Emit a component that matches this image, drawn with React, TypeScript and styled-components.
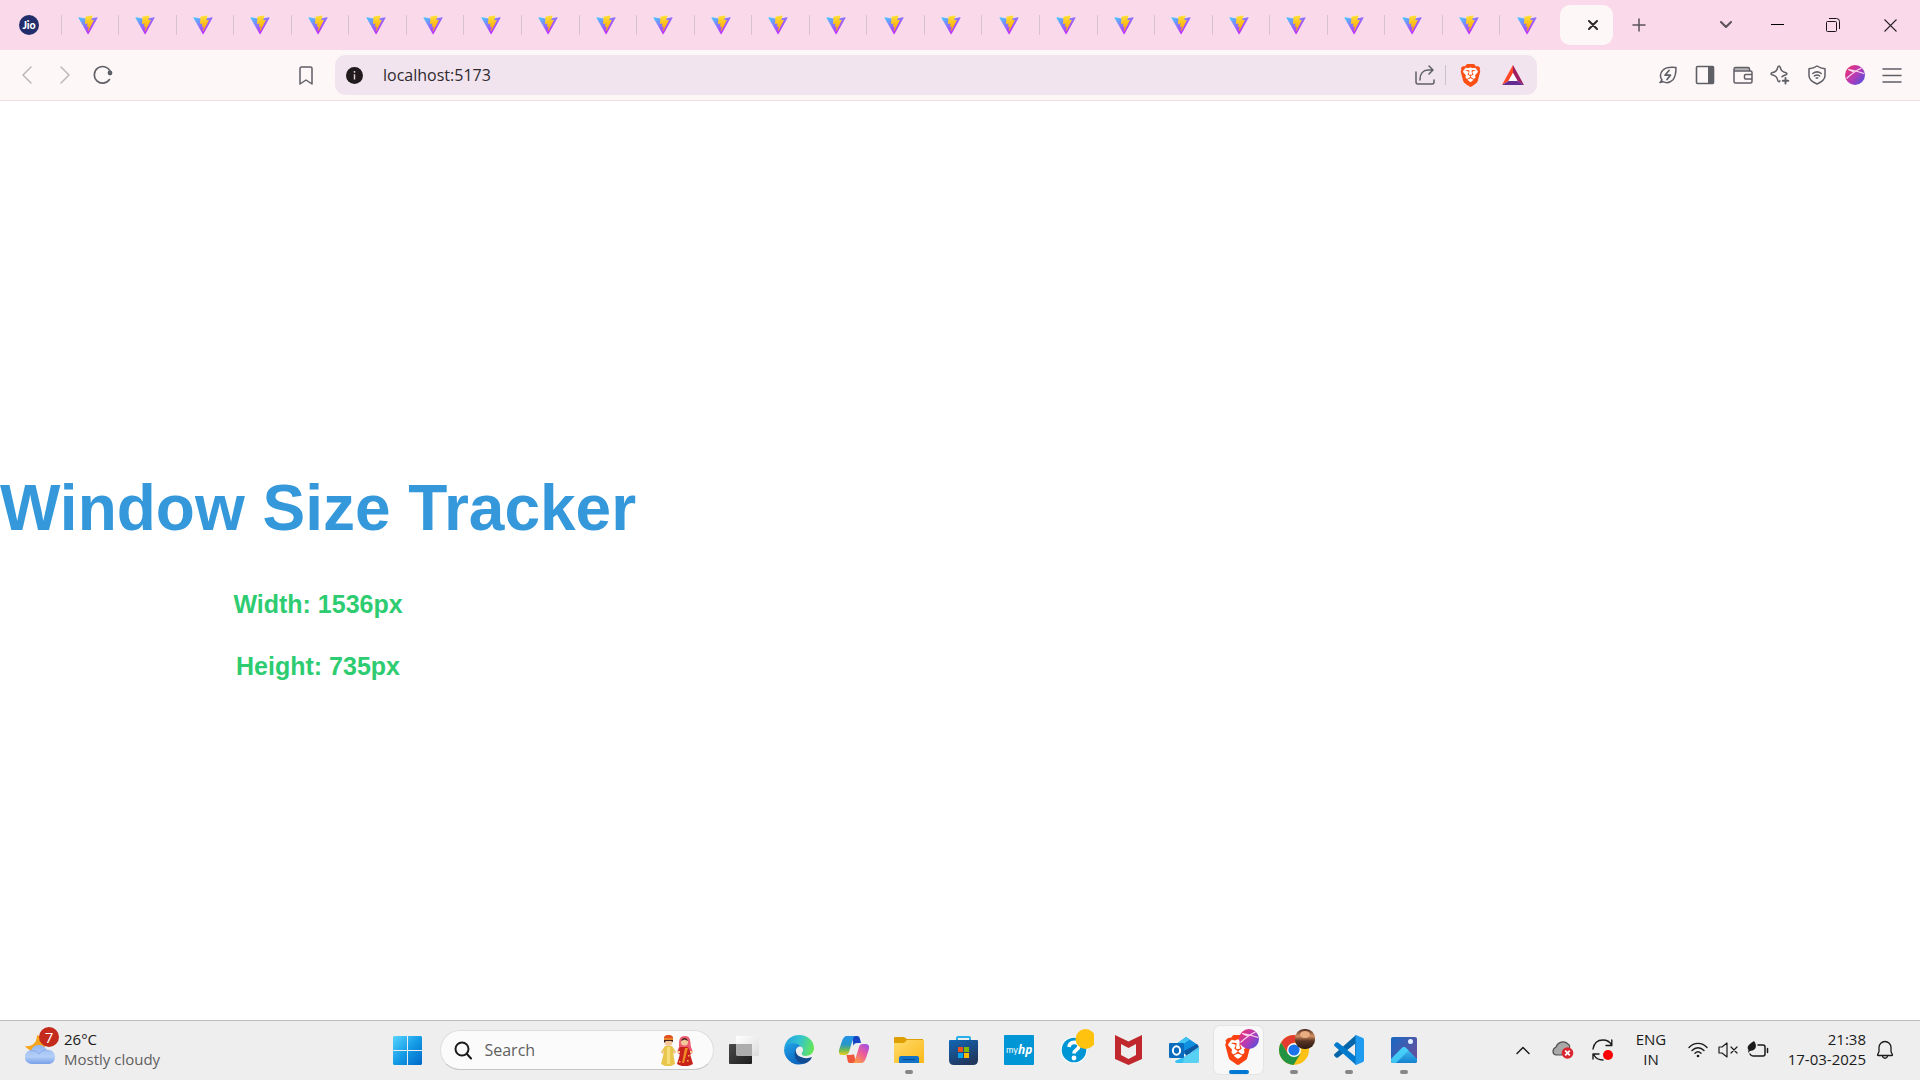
import React, { useEffect, useState } from "react";
import styled, { createGlobalStyle } from "styled-components";
import { SiBrave } from "react-icons/si";

const uiFont = '"Open Sans", "Noto Sans", sans-serif';

const GlobalStyle = createGlobalStyle`
  * { box-sizing: border-box; }
  body { margin: 0; background: #fff; font-family: ${uiFont}; }
  button { border: 0; padding: 0; background: none; font: inherit; color: inherit; cursor: pointer; }
  svg { display: block; flex: none; }
`;

const Screen = styled.div`
  display: flex;
  flex-direction: column;
  min-height: 100vh;
`;

/* ---------- tab strip ---------- */

const TabStrip = styled.header`
  display: flex;
  align-items: center;
  height: 50px;
  padding-left: 4px;
  background: #fad9ea;
  color: #5b5358;
`;

const TabList = styled.nav`
  display: grid;
  grid-auto-flow: column;
  grid-auto-columns: minmax(0, 1fr);
  flex: 1;
  min-width: 0;
`;

const Tab = styled.button`
  display: flex;
  align-items: center;
  justify-content: center;
  height: 20px;
  padding-right: 4px;
  border-right: 1px solid #d9c2cf;
  &:first-child { padding-right: 6px; }
  &:last-child { border-color: transparent; }
`;

const ActiveTab = styled.div`
  display: flex;
  align-items: center;
  justify-content: flex-end;
  width: 53px;
  height: 40px;
  padding-right: 10px;
  margin-left: 2px;
  border-radius: 10px;
  background: #fef7f8;
  color: #2d282b;
`;

const IconButton = styled.button<{ $w: number; $h?: number }>`
  display: flex;
  align-items: center;
  justify-content: center;
  width: ${(p) => p.$w}px;
  height: ${(p) => p.$h ?? 40}px;
`;

const NewTab = styled(IconButton)`
  margin: 0 43px 0 5px;
`;

/* ---------- toolbar ---------- */

const Toolbar = styled.div`
  display: flex;
  align-items: center;
  height: 51px;
  background: #fef7f8;
  border-bottom: 1px solid #f1dde4;
  color: #5f5f66;
`;

const Navigation = styled.div`
  display: flex;
  width: 335px;
  padding: 0 10px 0 8px;
`;

const BookmarkButton = styled(IconButton)`
  margin-left: auto;
`;

const AddressBar = styled.label`
  display: flex;
  align-items: center;
  flex: 1;
  min-width: 0;
  height: 40px;
  padding: 0 4px 0 11px;
  border-radius: 10px;
  background: #f1e4ee;
`;

const AddressInput = styled.input`
  flex: 1;
  min-width: 0;
  margin-left: 20px;
  padding: 0;
  border: 0;
  outline: 0;
  background: none;
  color: #2f292e;
  font: 16px/24px ${uiFont};
`;

const Divider = styled.span`
  width: 1px;
  height: 20px;
  margin-right: 1px;
  background: #cbc3cc;
`;

const Tools = styled.div`
  display: grid;
  grid-template-columns: repeat(7, 1fr);
  justify-items: center;
  width: 262px;
  margin: 0 9px 0 112px;
`;

/* ---------- page ---------- */

const Page = styled.main`
  display: flex;
  align-items: center;
  flex: 1;
  padding-top: 18px;
  font-family: "Liberation Sans", Arial, sans-serif;
  font-weight: 700;
  text-align: center;
`;

const Title = styled.h1`
  margin: 43px 0 42px;
  color: #3498db;
  font-size: 64px;
  line-height: 70px;
`;

const Measure = styled.p`
  margin: 0 0 24px;
  color: #2ecc71;
  font-size: 25px;
  line-height: 38px;
`;

/* ---------- taskbar ---------- */

const Taskbar = styled.footer`
  display: grid;
  grid-template-columns: minmax(0, 380fr) auto minmax(0, 488fr);
  align-items: center;
  height: 60px;
  padding-bottom: 1px;
  border-top: 1px solid #bcbcbc;
  background: #eeeeee;
  color: #1b1b1b;
`;

const Weather = styled.button`
  display: flex;
  align-items: center;
  gap: 9px;
  justify-self: start;
  margin-left: 25px;
  text-align: left;
`;

const WeatherIcon = styled.span`
  position: relative;
`;

const Badge = styled.span`
  position: absolute;
  top: -8px;
  right: -4px;
  width: 20px;
  height: 20px;
  border-radius: 50%;
  background: #c42b1c;
  color: #fff;
  font-size: 15px;
  line-height: 20px;
  text-align: center;
`;

const Lines = styled.span<{ $align?: string }>`
  display: flex;
  flex-direction: column;
  align-items: ${(p) => p.$align ?? "flex-start"};
  padding-bottom: 2px;
  font-size: 15px;
  line-height: 20px;
`;

const Muted = styled.span`
  color: #5f5f5f;
`;

const Apps = styled.div`
  display: flex;
  align-items: center;
`;

const SearchBox = styled.label`
  display: flex;
  align-items: center;
  width: 274px;
  height: 40px;
  margin: 0 2px 0 5px;
  padding: 0 20px 0 13px;
  border: 1px solid #dedede;
  border-bottom-color: #c6c6c6;
  border-radius: 20px;
  background: #fbfbfb;
`;

const SearchInput = styled.input`
  flex: 1;
  min-width: 0;
  margin-left: 12px;
  padding: 0;
  border: 0;
  outline: 0;
  background: none;
  color: #1b1b1b;
  font: 16px/24px ${uiFont};
  &::placeholder { color: #5f5f5f; opacity: 1; }
`;

const AppSlot = styled.button<{ $state?: "idle" | "running" | "active" }>`
  position: relative;
  display: flex;
  align-items: center;
  justify-content: center;
  width: 49px;
  height: 48px;
  margin: 0 3px;
  border-radius: 6px;
  background: ${(p) => (p.$state === "active" ? "#f8f8f8" : "transparent")};
  box-shadow: ${(p) => (p.$state === "active" ? "0 0 0 1px #e4e4e4" : "none")};
  &::after {
    content: "";
    position: absolute;
    bottom: 0;
    width: ${(p) => (p.$state === "active" ? 20 : 8)}px;
    height: 4px;
    border-radius: 2px;
    background: ${(p) =>
      p.$state === "active" ? "#0078d4" : p.$state === "running" ? "#868686" : "transparent"};
  }
`;

const Tray = styled.div`
  display: flex;
  align-items: center;
  justify-content: flex-end;
  padding-right: 16px;
`;

const Language = styled.button`
  width: 56px;
  margin-right: 4px;
`;

const QuickSettings = styled.button`
  display: grid;
  grid-template-columns: repeat(3, 30px);
  align-items: center;
  justify-items: center;
  height: 40px;
`;

const Clock = styled.button`
  width: 93px;
`;

/* ---------- drawings ---------- */

const line = {
  fill: "none",
  stroke: "currentColor",
  strokeLinecap: "round",
  strokeLinejoin: "round",
} as const;

const SharedPaints = () => (
  <defs>
    <linearGradient id="viteBody" gradientUnits="userSpaceOnUse" x1="6" y1="33" x2="235" y2="344">
      <stop stopColor="#41D1FF" />
      <stop offset="1" stopColor="#BD34FE" />
    </linearGradient>
    <linearGradient id="viteBolt" gradientUnits="userSpaceOnUse" x1="194.6" y1="8.8" x2="236" y2="293">
      <stop stopColor="#FFEA83" />
      <stop offset="0.083" stopColor="#FFDD35" />
      <stop offset="1" stopColor="#FFA800" />
    </linearGradient>
  </defs>
);

const ViteLogo = () => (
  <svg width="20" height="20" viewBox="0 0 410 404">
    <SharedPaints />
    <path fill="url(#viteBody)" d="M399.641 59.5246L215.643 388.545C211.844 395.338 202.084 395.378 198.228 388.618L10.5817 59.5563C6.38087 52.1896 12.6802 43.2665 21.0281 44.7586L205.223 77.6824C206.398 77.8924 207.601 77.8904 208.776 77.6763L389.119 44.8058C397.439 43.2894 403.768 52.1434 399.641 59.5246Z" />
    <path fill="url(#viteBolt)" d="M292.965 1.5744L156.801 28.2552C154.563 28.6937 152.906 30.5903 152.771 32.8664L144.395 174.33C144.198 177.662 147.258 180.248 150.51 179.498L188.42 170.749C191.967 169.931 195.172 173.055 194.443 176.622L183.18 231.775C182.422 235.487 185.907 238.661 189.532 237.56L212.947 230.446C216.577 229.344 220.065 232.527 219.297 236.242L201.398 322.875C200.278 328.294 207.486 331.249 210.492 326.603L212.5 323.5L323.454 102.072C325.312 98.3645 322.108 94.137 318.036 94.9228L279.014 102.454C275.347 103.161 272.227 99.746 273.262 96.1583L298.731 7.86689C299.767 4.27314 296.636 0.855181 292.965 1.5744Z" />
  </svg>
);

const JioLogo = () => (
  <svg width="20" height="20" viewBox="0 0 20 20">
    <circle cx="10" cy="10" r="10" fill="#222d6b" />
    <text x="10" y="13.5" fill="#fff" fontFamily="Lato, sans-serif" fontSize="10.5" fontWeight="900" textAnchor="middle">Jio</text>
  </svg>
);

const BraveLogo = ({ size }: { size: number }) => (
  <svg width={size} height={size} viewBox="0 0 24 24">
    <ellipse cx="12" cy="12" rx="7.5" ry="9" fill="#fff" />
    <SiBrave size={24} color="#fb4f14" />
  </svg>
);

const BatLogo = () => (
  <svg width="22" height="20" viewBox="0 0 22 20">
    <path fill="#ff4724" d="M11 0 0 20l6.500-4L11 8z" />
    <path fill="#9e1f63" d="M11 0l11 20-6.500-4L11 8z" />
    <path fill="#662d91" d="M0 20h22l-6.500-4h-9z" />
    <path fill="#fff" d="M11 8l4.500 8h-9z" />
  </svg>
);

const ShareIcon = () => (
  <svg width="20" height="20" viewBox="0 0 20 20" {...line} strokeWidth="1.5">
    <path d="M1 7v10a2 2 0 0 0 2 2h14a2 2 0 0 0 2-2v-2M5 15v-1c0-5 3-9 8-9h5M14 1l4 4-4 4" />
  </svg>
);

const InfoIcon = () => (
  <svg width="17" height="17" viewBox="0 0 17 17">
    <circle cx="8.500" cy="8.500" r="8.500" fill="#201a1c" />
    <path d="M8.500 4v1.700M8.500 7.200V12.500" stroke="#d8ccd5" strokeWidth="1.500" />
  </svg>
);

const LeafIcon = () => (
  <svg width="18" height="18" viewBox="0 0 18 18" {...line} strokeWidth="1.500">
    <path d="M17 1.500c-5-.500-10-.500-13 2.500-3 3-3 7-1 10l-2 2.500 3-.800c3 1.500 7 1 10-2 2.500-3 3-7 3-12.200z" />
    <path d="M10 4.500 6 9.200h5.500L8 13.500" strokeWidth="1.700" />
  </svg>
);

const SidebarIcon = () => (
  <svg width="20" height="20" viewBox="0 0 20 20">
    <rect x="1.500" y="1.500" width="17" height="17" rx="1" {...line} strokeWidth="1.600" />
    <path fill="currentColor" d="M13 1.500h6v17h-6z" />
  </svg>
);

const WalletIcon = () => (
  <svg width="20" height="18" viewBox="0 0 20 18" {...line} strokeWidth="1.500">
    <path d="M16.500 5V3a1.500 1.500 0 0 0-1.500-1.500H2.500A1.500 1.500 0 0 0 1 3v12.500A1.500 1.500 0 0 0 2.500 17h15a1.500 1.500 0 0 0 1.500-1.500v-9A1.500 1.500 0 0 0 17.500 5H1M19 8.500h-6.500a1 1 0 0 0-1 1V12a1 1 0 0 0 1 1H19" />
    <path d="M1.500 2h15v2.500h-15z" fill="currentColor" fillOpacity=".45" stroke="none" />
  </svg>
);

const SparkleIcon = () => (
  <svg width="20" height="20" viewBox="0 0 20 20" {...line} strokeWidth="1.500">
    <path d="M9 1c.600 0 .900.400 1.100 1 1 3.700 1.800 4.600 5.900 5.800 1.200.400 1.200 1.600 0 2-2 .600-3.200 1-4 2M9 1c-.600 0-.900.400-1.100 1-1 3.700-1.900 4.600-6 5.800-1.200.400-1.200 1.600 0 2C6 11 6.900 12 7.900 15.700c.400 1.200 1.600 1.200 2 .200" />
    <path d="M15.500 13v5.500M12.800 15.700h5.500" strokeWidth="1.900" />
  </svg>
);

const ShieldIcon = () => (
  <svg width="18" height="20" viewBox="0 0 18 20" {...line} strokeWidth="1.500">
    <path d="M9 1c2.500 1.800 5 2.500 8 2.700v6.800c0 4-4 6.800-8 8.500-4-1.700-8-4.500-8-8.500V3.700C4 3.500 6.500 2.800 9 1z" />
    <path d="M4.800 8.500c2.600-2 5.800-2 8.400 0M6.300 11c1.700-1.300 3.700-1.300 5.400 0M8.200 13h1.600" />
  </svg>
);

const ProfileOrb = ({ size }: { size: number }) => (
  <svg width={size} height={size} viewBox="0 0 20 20">
    <defs>
      <linearGradient id="orb" x1="0" y1="0.100" x2="1" y2="0.900">
        <stop stopColor="#f0306a" />
        <stop offset=".5" stopColor="#b83bb4" />
        <stop offset="1" stopColor="#4c50e0" />
      </linearGradient>
    </defs>
    <circle cx="10" cy="10" r="10" fill="url(#orb)" />
    <path d="M3 4.500c5 .500 10 2 16 4M1.500 13.500C7 8.500 11 5.500 16.500 3M4 5l5 2" fill="none" stroke="#fbdcf0" strokeWidth="1.100" />
  </svg>
);

const MenuIcon = () => (
  <svg width="20" height="18" viewBox="0 0 20 18" {...line} strokeWidth="1.500">
    <path d="M1 3h18M1 9.500h18M1 16h18" />
  </svg>
);

const Stroke = ({ d, w, h, weight = 1.5 }: { d: string; w: number; h: number; weight?: number }) => (
  <svg width={w} height={h} viewBox={`0 0 ${w} ${h}`} {...line} strokeWidth={weight}>
    <path d={d} />
  </svg>
);

const ReloadIcon = () => (
  <svg width="20" height="20" viewBox="0 0 20 20">
    <path {...line} strokeWidth="1.600" d="M16.500 14.500A8.300 8.300 0 1 1 17 6" />
    <circle cx="17" cy="8" r="2.400" fill="currentColor" />
  </svg>
);

const CloudMoon = () => (
  <svg width="30" height="30" viewBox="0 0 30 30">
    <defs>
      <linearGradient id="cloud" x1="0" y1="0" x2="0" y2="1">
        <stop stopColor="#94b6f1" />
        <stop offset=".6" stopColor="#b4cff8" />
        <stop offset="1" stopColor="#789fe8" />
      </linearGradient>
    </defs>
    <path fill="#f6a41c" d="M12 0c7 2 10 8 7 14l-8 2C6 16 2 14 0 11c7 1 12-3 12-11z" />
    <path fill="url(#cloud)" d="M7 29a7 7 0 0 1-.500-14C7.500 11.500 10.500 10 14 10c4 0 6.500 2 7.500 5 5-1 8.500 3 8.500 7 0 4.500-3 7-7 7z" />
    <path fill="none" stroke="#86a9e9" d="M5 16c4-1 7 0 9 3M14 19c2-3 4-4 8-4" />
  </svg>
);

const WindowsLogo = () => (
  <svg width="29" height="29" viewBox="0 0 29 29">
    <defs>
      <linearGradient id="win" x1="0" y1="0" x2="29" y2="29" gradientUnits="userSpaceOnUse">
        <stop stopColor="#58d5ff" />
        <stop offset=".5" stopColor="#149be6" />
        <stop offset="1" stopColor="#0067c8" />
      </linearGradient>
    </defs>
    <path fill="url(#win)" d="M1 0h13v14H0V1zM15 0h13l1 1v13H15zM0 15h14v14H1l-1-1zM15 15h14v13l-1 1H15z" />
  </svg>
);

const WeddingPair = () => (
  <svg width="32" height="31" viewBox="0 0 32 31">
    <path fill="#e8c64c" d="M4 11h7l4 6-2 2-1-2 2 12-4 2H4l-4-2 3-12-1 2-2-2z" />
    <path fill="#f6dd79" d="M6 12h3v17H6z" />
    <circle cx="7.500" cy="7" r="4" fill="#f4c79a" />
    <path fill="#42201b" d="M3 4h9v3l-2-1H5L3 8z" />
    <path fill="#e2511e" d="M3 2c2-3 7-3 9 0v3H3z" />
    <path fill="#e8b93a" d="M3 3.500h9v1H3z" />
    <path fill="#ec5d72" d="M18 12c0-7 0-11 6-11s5 5 6 11l2 5-3 3H19l-3-3z" />
    <circle cx="23.500" cy="7" r="3.600" fill="#f4c79a" />
    <path fill="#4a211c" d="M20 6c1-4 6-4 7 0l-3.500-1.500z" />
    <path fill="#c9211c" d="M19 12h8l3 6-1 1 3 10c-5 3-11 3-16 0l3-10-2-2z" />
    <path fill="#f08a23" d="M24 13h3l-4 15h-2z" />
    <path fill="#f3bd43" d="M18 26h1.500v1.500H18zM26 25h1.500v1.500H26zM27 20h1.500v1.500H27z" />
    <path fill="#f4c79a" d="M0 16h3v2H0zM12 16h3v2h-3zM16 16h3v2h-3zM29 16h3v2h-3z" />
  </svg>
);

const TaskView = () => (
  <svg width="30" height="28" viewBox="0 0 30 28">
    <defs>
      <linearGradient id="tvDark" x1="0" y1="0" x2="1" y2="1"><stop stopColor="#4a4a4a" /><stop offset="1" stopColor="#1e1e1e" /></linearGradient>
      <linearGradient id="tvLight" x1="0" y1="0" x2="1" y2="1"><stop stopColor="#fff" /><stop offset="1" stopColor="#dcdcdc" /></linearGradient>
    </defs>
    <rect x="7" width="23" height="20" rx="1" fill="url(#tvLight)" />
    <rect y="8" width="23" height="20" rx="1" fill="url(#tvDark)" />
    <path d="M7 8h16v12H8l-1-1z" fill="#adadad" />
  </svg>
);

const EdgeLogo = () => (
  <svg width="30" height="30" viewBox="0 0 30 30">
    <defs>
      <linearGradient id="edgeTop" x1="0" y1=".3" x2="1" y2=".5"><stop stopColor="#1f9fe0" /><stop offset=".5" stopColor="#34c4cf" /><stop offset="1" stopColor="#66e656" /></linearGradient>
      <linearGradient id="edgeLeft" x1="0" y1="0" x2=".6" y2="1"><stop stopColor="#22a4e8" /><stop offset="1" stopColor="#0a62bd" /></linearGradient>
    </defs>
    <path fill="url(#edgeTop)" d="M0 14C1 5.500 7 0 15 0c9 0 15 6 15 13 0 5-4 8-8.500 8-3 0-4.500-1-4-2.500 2-3 1-7-4-8.500C8 8 2 10 0 14z" />
    <path fill="url(#edgeLeft)" d="M0 15c1-5 6-7.500 11-6.500 4 .800 7 3 7.500 6.500-3-3-7-.500-7 4 0 6 5 9 11 8.500A15 15 0 0 1 0 15z" />
    <path fill="#124c92" d="M12 14c-4 7 1 15 9 14.500 3-.800 6-3.500 7-6.500-7 3-15 0-16-8z" />
    <path fill="#eee" d="M12 17c-.800-3 1.500-5.500 4-5.500 2 0 3 1.500 3 3.500 0 1.800-2.500 3.500-1 5 2 1.800 6 1.500 9 .500-6 3.500-14 2-15-3.500z" />
  </svg>
);

const CopilotLogo = () => (
  <svg width="30" height="28" viewBox="0 0 30 28">
    <defs>
      <linearGradient id="coA" x1="0" y1="0" x2="0" y2="1"><stop stopColor="#2394ec" /><stop offset=".45" stopColor="#2797c8" /><stop offset=".75" stopColor="#74b94e" /><stop offset="1" stopColor="#edcd24" /></linearGradient>
      <linearGradient id="coB" x1="1" y1="0" x2=".3" y2="1"><stop stopColor="#9a4ef0" /><stop offset=".5" stopColor="#ea5b9c" /><stop offset="1" stopColor="#ff9a4b" /></linearGradient>
    </defs>
    <path fill="#1544c5" d="M13 0h5c2 0 2.500 1 3 3l1 4h-4c-2 0-3 1-3.500 3z" />
    <path fill="#ef573d" d="M17 27h-6c-2 0-2-1-2.500-3L7.500 19H11c2 0 3-1 3.500-3z" />
    <path fill="url(#coA)" d="M8 0h9c-2 0-2.500 1-3 3l-4 13c-.600 2-1.500 3-4 3H3c-2.500 0-3.500-2-3-5L3 5c1-3 2.500-5 5-5z" />
    <path fill="url(#coB)" d="M22 27h-9c2 0 2.500-1 3-3l4-13c.600-2 1.500-3 4-3h3c2.500 0 3.500 2 3 5l-3 9c-1 3-2.500 5-5 5z" />
    <path fill="#eee" d="M15.500 8.500h3.500L15.500 18.500H12z" />
  </svg>
);

const FolderLogo = () => (
  <svg width="30" height="28" viewBox="0 0 30 28">
    <defs><linearGradient id="fold" x1="0" y1="0" x2="1" y2="1"><stop stopColor="#ffdc6b" /><stop offset="1" stopColor="#fbb819" /></linearGradient></defs>
    <path fill="#dfa006" d="M0 2q0-1 1-1h9l3 2h16v4H0z" />
    <path fill="url(#fold)" d="M0 7h10l3-3h17v23H0z" />
    <path fill="#1173c7" d="M5 27v-5q0-2 2-2h16q2 0 2 2v5z" />
    <path stroke="#0a4a8c" d="M9 23.500h12" />
  </svg>
);

const StoreLogo = () => (
  <svg width="29" height="30" viewBox="0 0 29 30">
    <defs><linearGradient id="store" x1="0" y1="0" x2=".5" y2="1"><stop stopColor="#1267b5" /><stop offset="1" stopColor="#21375f" /></linearGradient></defs>
    <path fill="none" stroke="#28afea" strokeWidth="2" d="M8 7V3q0-1 1-1h11q1 0 1 1v4" />
    <path fill="url(#store)" d="M0 6q0-1 1-1h27q1 0 1 1v19q0 5-5 5H5q-5 0-5-5z" />
    <path fill="#f1511b" d="M9 12h5v5H9z" /><path fill="#80b900" d="M15 12h5v5h-5z" />
    <path fill="#00a4ef" d="M9 18h5v5H9z" /><path fill="#ffb901" d="M15 18h5v5h-5z" />
  </svg>
);

const MyHpLogo = () => (
  <svg width="30" height="30" viewBox="0 0 30 30">
    <rect width="30" height="30" rx="1" fill="#0096d6" />
    <text x="2" y="18" fill="#fff" fontFamily="Lato, sans-serif" fontSize="9">my</text>
    <text x="14" y="19" fill="#fff" fontFamily='"Open Sans", sans-serif' fontSize="12" fontWeight="700" fontStyle="italic">hp</text>
  </svg>
);

const HelpLogo = () => (
  <svg width="40" height="42" viewBox="-7 -1 40 42">
    <circle cx="13" cy="20" r="13.300" fill="#fff" />
    <circle cx="13" cy="20" r="12.300" fill="#0096d6" />
    <path fill="none" stroke="#fff" strokeWidth="3.600" d="M8 17c.500-6 10-6 10-1 0 4-5 3.500-5 7.500" />
    <circle cx="13" cy="28" r="2.400" fill="#fff" />
    <circle cx="24.500" cy="9" r="10" fill="#ffc20e" />
  </svg>
);

const McAfeeLogo = () => (
  <svg width="27" height="30" viewBox="0 0 27 30">
    <path fill="#c1282d" d="M0 0l13.500 6.500L27 0v24l-13.500 6L0 24zM6 9v11l7.500 4 7.500-4V9l-7.500 4z" fillRule="evenodd" />
  </svg>
);

const OutlookLogo = () => (
  <svg width="30" height="27" viewBox="0 0 30 27">
    <path fill="#0f8fe0" d="M6 8L17 0l12 8-9 9H6z" />
    <path fill="#41c3f2" d="M7 7L17 0l4 2.500L10 10z" />
    <path fill="#0c59a4" d="M15 14L28 7l2 3-13 9z" />
    <path fill="#35c1f1" d="M30 10v14q0 2-2 2H8q-2 0-2-2l13-6z" />
    <path fill="#7de2f6" d="M15 20l15-8v14H14z" opacity=".5" />
    <rect y="6" width="15" height="15" rx="1" fill="#0a6cbd" />
    <ellipse cx="7.500" cy="13.500" rx="3.600" ry="4.200" fill="none" stroke="#fff" strokeWidth="2" />
  </svg>
);

const BraveApp = () => (
  <svg width="44" height="42" viewBox="0 0 44 42">
    <svg x="6" y="6" width="30" height="30" viewBox="0 0 24 24">
      <ellipse cx="12" cy="12" rx="7.500" ry="9" fill="#fff" />
      <SiBrave size={24} color="#fb4312" />
    </svg>
    <svg x="22" y="0" width="20" height="20"><ProfileOrb size={20} /></svg>
  </svg>
);

const ChromeApp = () => (
  <svg width="42" height="42" viewBox="-6 0 42 42">
    <defs><linearGradient id="portrait" x1="0" y1="0" x2="0" y2="1"><stop stopColor="#4b2a1e" /><stop offset=".35" stopColor="#d38f63" /><stop offset=".6" stopColor="#5a3424" /><stop offset="1" stopColor="#2c1a15" /></linearGradient></defs>
    <circle cx="15" cy="21" r="15" fill="#fbc116" />
    <path fill="#e33b2e" d="M2 13.500A15 15 0 0 1 28 13.500H15L9 24.500z" />
    <path fill="#229342" d="M2 13.500A15 15 0 0 0 14.500 36L21.500 24.700 9 24.800z" />
    <circle cx="15" cy="21" r="7" fill="#fff" />
    <circle cx="15" cy="21" r="5.600" fill="#1a73e8" />
    <rect x="16" y="0" width="20" height="20" rx="9" fill="url(#portrait)" />
    <ellipse cx="26" cy="5.500" rx="5" ry="3.500" fill="#e8ad80" />
  </svg>
);

const CodeLogo = () => (
  <svg width="30" height="30" viewBox="0 0 30 30">
    <path fill="#0065a9" d="M22 0v8L4 22.500q-1 .700-2 0L.500 21q-1-1 0-2z" />
    <path fill="#007acc" d="M22 30v-8L4 7.500q-1-.700-2 0L.500 9q-1 1 0 2z" />
    <path fill="#1f9cf0" d="M22 0l7 3q1 .500 1 2v20q0 1.500-1 2l-7 3q-1 0-1-1V1z" />
    <path fill="#1481ca" d="M21 1h1v28h-1z" />
  </svg>
);

const PhotosLogo = () => (
  <svg width="26" height="26" viewBox="0 0 26 26">
    <defs>
      <linearGradient id="phBg" x1="0" y1="0" x2="1" y2=".7"><stop stopColor="#1769c4" /><stop offset="1" stopColor="#65509f" /></linearGradient>
      <linearGradient id="phHill" x1="0" y1="0" x2="0" y2="1"><stop stopColor="#46c8f4" /><stop offset="1" stopColor="#1580d0" /></linearGradient>
    </defs>
    <rect width="26" height="26" rx="2" fill="url(#phBg)" />
    <path fill="url(#phHill)" d="M0 22L11 11q2-2 4 0l11 11v2q0 2-2 2H2q-2 0-2-2z" />
    <path fill="#48d4fa" d="M0 22L11 11q2-2 4 0l2.500 2.500L5 26H2q-2 0-2-2z" opacity=".8" />
    <circle cx="19.500" cy="4.500" r="2.500" fill="#e6efff" />
  </svg>
);

const CloudError = () => (
  <svg width="22" height="20" viewBox="0 0 22 20">
    <path fill="#a9a9a9" stroke="#4f4f4f" strokeWidth="1.200" d="M4 15c-4-1-4-6 0-8C6 2 12 0 16 4c2 1 2 3 1 5l-7 6z" />
    <circle cx="15.500" cy="13" r="5.800" fill="#d9262f" />
    <path stroke="#fff" strokeWidth="1.700" d="M13.200 10.700l4.600 4.600m0-4.600l-4.600 4.600" />
  </svg>
);

const SyncIcon = () => (
  <svg width="22" height="22" viewBox="0 0 22 22">
    <path {...line} strokeWidth="1.400" d="M1 10C2 4 6 1 11 1c4 0 7 2 8.500 5M19.800 1v5.500H14M1 20v-5h6M2 16c1.500 3 5 5 9 5" />
    <circle cx="16" cy="16" r="5" fill="#f00" />
  </svg>
);

const WifiIcon = () => (
  <svg width="20" height="16" viewBox="0 0 20 16" {...line} strokeWidth="1.400">
    <path d="M1 5.500c5-5.500 13-5.500 18 0M4 8.500c3.500-3.700 8.500-3.700 12 0M7 11.300c2-2 4-2 6 0" />
    <circle cx="10" cy="14" r="1.300" fill="currentColor" stroke="none" />
  </svg>
);

const MutedIcon = () => (
  <svg width="20" height="16" viewBox="0 0 20 16" {...line} strokeWidth="1.200">
    <path d="M1 5h3l5-4v14l-5-4H1zM13 5l6 6M19 5l-6 6" />
  </svg>
);

const BatteryIcon = () => (
  <svg width="22" height="18" viewBox="0 0 22 18">
    <path {...line} strokeWidth="1.500" d="M11 4h5q2 0 2 2v7q0 2-2 2H6q-2 0-3-2M20.500 7.500v4" />
    <path fill="currentColor" d="M7 0c3 4 2.500 8-1.500 9.500L3 10l-2 2 .500-3C-1 6 2 3 7 0z" />
  </svg>
);

const BellIcon = () => (
  <svg width="18" height="20" viewBox="0 0 18 20" {...line} strokeWidth="1.300">
    <path d="M9 1.500a6 6 0 0 0-6 6v4L1.500 15q0 .500.500.500h14q.500 0 .500-.500L15 11.500v-4a6 6 0 0 0-6-6zM6.500 16c.500 3 4.500 3 5 0" />
  </svg>
);

/* ---------- app ---------- */

const apps: { name: string; icon: React.ReactNode; state?: "running" | "active" }[] = [
  { name: "Task view", icon: <TaskView /> },
  { name: "Edge", icon: <EdgeLogo /> },
  { name: "Copilot", icon: <CopilotLogo /> },
  { name: "File Explorer", icon: <FolderLogo />, state: "running" },
  { name: "Microsoft Store", icon: <StoreLogo /> },
  { name: "myHP", icon: <MyHpLogo /> },
  { name: "Get help", icon: <HelpLogo /> },
  { name: "McAfee", icon: <McAfeeLogo /> },
  { name: "Outlook", icon: <OutlookLogo /> },
  { name: "Brave", icon: <BraveApp />, state: "active" },
  { name: "Chrome", icon: <ChromeApp />, state: "running" },
  { name: "Visual Studio Code", icon: <CodeLogo />, state: "running" },
  { name: "Photos", icon: <PhotosLogo />, state: "running" },
];

const tools: [string, React.ReactNode][] = [
  ["Energy saver", <LeafIcon />],
  ["Sidebar", <SidebarIcon />],
  ["Wallet", <WalletIcon />],
  ["Leo", <SparkleIcon />],
  ["VPN", <ShieldIcon />],
  ["Profile", <ProfileOrb size={20} />],
  ["Menu", <MenuIcon />],
];

export default function App() {
  const [address, setAddress] = useState("localhost:5173");
  const [query, setQuery] = useState("");
  const [size] = useState({ width: 1536, height: 735 });

  useEffect(() => {
    document.title = "Window Size Tracker";
  }, []);

  return (
    <Screen>
      <GlobalStyle />
      <TabStrip>
        <TabList aria-label="Tabs">
          <Tab aria-label="Jio tab"><JioLogo /></Tab>
          {Array.from({ length: 26 }, (_, i) => (
            <Tab key={i} aria-label={`Vite tab ${i + 1}`}><ViteLogo /></Tab>
          ))}
        </TabList>
        <ActiveTab>
          <IconButton $w={20} $h={20} aria-label="Close tab">
            <Stroke w={10} h={10} weight={2} d="M1 1l8 8M9 1L1 9" />
          </IconButton>
        </ActiveTab>
        <NewTab $w={42} aria-label="New tab">
          <Stroke w={14} h={14} d="M7 1v12M1 7h12" />
        </NewTab>
        <IconButton $w={46} aria-label="Search tabs">
          <Stroke w={14} h={8} weight={2} d="M2 1l5 5 5-5" />
        </IconButton>
        <IconButton $w={56} aria-label="Minimize">
          <svg width="13" height="3" viewBox="0 0 13 3"><path d="M0 .5h13" stroke="#000" /></svg>
        </IconButton>
        <IconButton $w={56} aria-label="Restore">
          <svg width="14" height="14" viewBox="0 0 14 14" fill="none" stroke="#1a1517">
            <rect x=".5" y="3.5" width="10" height="10" rx="1" />
            <path d="M3 .5h7.500q3 0 3 3V11" />
          </svg>
        </IconButton>
        <IconButton $w={59} aria-label="Close window">
          <svg width="13" height="13" viewBox="0 0 13 13"><path d="M.5.5l12 12m0-12l-12 12" stroke="#2a2326" strokeWidth="1.100" /></svg>
        </IconButton>
      </TabStrip>

      <Toolbar>
        <Navigation>
          <IconButton $w={38} aria-label="Back" disabled>
            <svg width="10" height="18" viewBox="0 0 10 18" {...line} stroke="#bcb6ba" strokeWidth="1.500"><path d="M9 1L1 9l8 8" /></svg>
          </IconButton>
          <IconButton $w={38} aria-label="Forward" disabled>
            <svg width="10" height="18" viewBox="0 0 10 18" {...line} stroke="#bcb6ba" strokeWidth="1.500"><path d="M1 1l8 8-8 8" /></svg>
          </IconButton>
          <IconButton $w={38} aria-label="Reload"><ReloadIcon /></IconButton>
          <BookmarkButton $w={38} aria-label="Bookmark">
            <Stroke w={14} h={19} d="M1 2.500Q1 1 2.500 1h9Q13 1 13 2.500V18l-6-4-6 4z" />
          </BookmarkButton>
        </Navigation>
        <AddressBar>
          <InfoIcon />
          <AddressInput aria-label="Address" value={address} onChange={(e) => setAddress(e.target.value)} />
          <IconButton $w={40} aria-label="Share"><ShareIcon /></IconButton>
          <Divider />
          <IconButton $w={46} aria-label="Brave Shields"><BraveLogo size={23} /></IconButton>
          <IconButton $w={40} aria-label="Brave Rewards"><BatLogo /></IconButton>
        </AddressBar>
        <Tools>
          {tools.map(([name, icon]) => (
            <IconButton key={name} $w={36} aria-label={name}>{icon}</IconButton>
          ))}
        </Tools>
      </Toolbar>

      <Page>
        <section>
          <Title>Window Size Tracker</Title>
          <Measure>Width: {size.width}px</Measure>
          <Measure>Height: {size.height}px</Measure>
        </section>
      </Page>

      <Taskbar>
        <Weather>
          <WeatherIcon>
            <CloudMoon />
            <Badge>7</Badge>
          </WeatherIcon>
          <Lines>
            <span>26°C</span>
            <Muted>Mostly cloudy</Muted>
          </Lines>
        </Weather>
        <Apps>
          <AppSlot aria-label="Start"><WindowsLogo /></AppSlot>
          <SearchBox>
            <Stroke w={18} h={19} weight={2} d="M14.500 8a6.500 6.500 0 1 1-13 0a6.500 6.500 0 1 1 13 0M12.500 12.500L17 17.500" />
            <SearchInput aria-label="Search" placeholder="Search" value={query} onChange={(e) => setQuery(e.target.value)} />
            <WeddingPair />
          </SearchBox>
          {apps.map((app) => (
            <AppSlot key={app.name} $state={app.state} aria-label={app.name}>{app.icon}</AppSlot>
          ))}
        </Apps>
        <Tray>
          <IconButton $w={40} aria-label="Hidden icons">
            <Stroke w={14} h={9} d="M1 7.500l6-6 6 6" />
          </IconButton>
          <IconButton $w={40} aria-label="OneDrive"><CloudError /></IconButton>
          <IconButton $w={40} aria-label="Updates"><SyncIcon /></IconButton>
          <Language>
            <Lines $align="center">
              <span>ENG</span>
              <span>IN</span>
            </Lines>
          </Language>
          <QuickSettings aria-label="Quick settings">
            <WifiIcon />
            <MutedIcon />
            <BatteryIcon />
          </QuickSettings>
          <Clock>
            <Lines $align="flex-end">
              <span>21:38</span>
              <span>17-03-2025</span>
            </Lines>
          </Clock>
          <IconButton $w={38} aria-label="Notifications"><BellIcon /></IconButton>
        </Tray>
      </Taskbar>
    </Screen>
  );
}
